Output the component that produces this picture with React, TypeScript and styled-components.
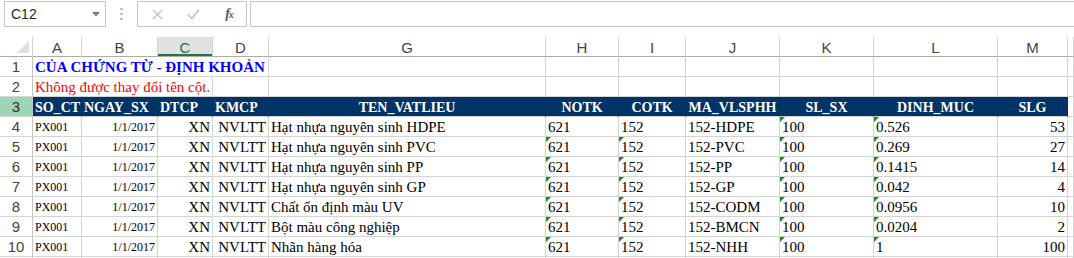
import React from "react";
import styled, { createGlobalStyle, css } from "styled-components";

const GlobalStyle = createGlobalStyle`
  html, body { margin: 0; padding: 0; background: #ffffff; overflow: hidden; }
  #root { width: 1074px; height: 258px; overflow: hidden; }
`;

const COLS = "33px 49px 76px 55px 56px 277px 73px 67px 94px 94px 124px 70px 1fr";
const GRID = "#d4d4d4";
const NAVY = "#003366";
const SERIF = `"Liberation Serif", "Times New Roman", serif`;
const SANS = `"Liberation Sans", Arial, sans-serif`;

const Page = styled.div`
  width: 1074px;
  height: 258px;
  display: flex;
  flex-direction: column;
  background: #fff;
  overflow: hidden;
`;

const FormulaBar = styled.div`
  flex-shrink: 0;
  height: 37px;
  box-sizing: border-box;
  padding: 1px 0 0 4px;
  display: flex;
  align-items: flex-start;
`;

const Box = styled.div`
  height: 26px;
  box-sizing: border-box;
  border: 1px solid #c6c6c6;
  display: flex;
  align-items: center;
`;

const NameBox = styled(Box)`
  width: 102px;
  padding: 0 5px 0 6px;
  justify-content: space-between;
  font-family: ${SANS};
  font-size: 14px;
  color: #262626;
`;

const Dots = styled.div`
  width: 31px;
  height: 26px;
  display: flex;
  align-items: center;
  justify-content: center;
`;

const ButtonBox = styled(Box)`
  width: 110px;
  padding: 0 0 0 12px;
`;

const IconSlot = styled.div<{ $w: number }>`
  width: ${(p) => p.$w}px;
  height: 24px;
  display: flex;
  align-items: center;
  justify-content: center;
`;

const Fx = styled.span`
  font-family: ${SERIF};
  font-style: italic;
  font-weight: bold;
  font-size: 14px;
  color: #5a5a5a;
  letter-spacing: -1px;
  & > small {
    font-size: 10px;
  }
`;

const FormulaInput = styled(Box)`
  flex: 1;
  margin-left: 3px;
  border-right: none;
`;

const SheetRow = styled.div<{ $h?: number }>`
  flex-shrink: 0;
  display: grid;
  grid-template-columns: ${COLS};
  height: ${(p) => p.$h ?? 20}px;
`;

const ColHead = styled.div<{ $sel?: boolean }>`
  box-sizing: border-box;
  border-right: 1px solid ${GRID};
  border-bottom: 1px solid #ababab;
  display: flex;
  align-items: center;
  justify-content: center;
  font-family: ${SANS};
  font-size: 15px;
  color: #444;
  padding-top: 1px;
  ${(p) =>
    p.$sel &&
    css`
      background: #e1e1e1;
      color: #217346;
      box-shadow: inset 0 -2px 0 #217346;
    `}
`;

const Corner = styled.div`
  box-sizing: border-box;
  border-right: 1px solid ${GRID};
  border-bottom: 1px solid #ababab;
  display: flex;
  align-items: flex-end;
  justify-content: flex-end;
  padding: 0 3px 3px 0;
`;

const RowNum = styled.div<{ $sel?: boolean }>`
  box-sizing: border-box;
  border-right: 1px solid #c6c6c6;
  border-bottom: 1px solid ${GRID};
  display: flex;
  align-items: center;
  justify-content: center;
  font-family: ${SANS};
  font-size: 15px;
  color: #444;
  background: ${(p) => (p.$sel ? "#9fd5b7" : "#fff")};
  ${(p) => p.$sel && css`color: #2b2b2b;`}
`;

type Align = "left" | "right" | "center";

const Cell = styled.div<{
  $align?: Align;
  $span?: number;
  $size?: number;
  $bold?: boolean;
  $color?: string;
  $fill?: string;
  $flag?: boolean;
}>`
  position: relative;
  box-sizing: border-box;
  grid-column: span ${(p) => p.$span ?? 1};
  border-right: 1px solid ${(p) => p.$fill ?? GRID};
  border-bottom: 1px solid ${GRID};
  background: ${(p) => p.$fill ?? "transparent"};
  display: flex;
  align-items: flex-end;
  justify-content: ${(p) =>
    p.$align === "right" ? "flex-end" : p.$align === "center" ? "center" : "flex-start"};
  padding: 0 2px 0 2px;
  font-family: ${SERIF};
  font-size: ${(p) => p.$size ?? 15}px;
  font-weight: ${(p) => (p.$bold ? 700 : 400)};
  color: ${(p) => p.$color ?? "#000"};
  line-height: 17px;
  white-space: nowrap;
  overflow: visible;
  ${(p) =>
    p.$flag &&
    css`
      &::before {
        content: "";
        position: absolute;
        left: 0;
        top: 0;
        width: 0;
        height: 0;
        border-top: 5px solid #1e8a1e;
        border-right: 5px solid transparent;
      }
    `}
`;

const letters = ["A", "B", "C", "D", "G", "H", "I", "J", "K", "L", "M", ""];

const headers: { t: string; a: Align }[] = [
  { t: "SO_CT", a: "left" },
  { t: "NGAY_SX", a: "left" },
  { t: "DTCP", a: "left" },
  { t: "KMCP", a: "left" },
  { t: "TEN_VATLIEU", a: "center" },
  { t: "NOTK", a: "center" },
  { t: "COTK", a: "center" },
  { t: "MA_VLSPHH", a: "center" },
  { t: "SL_SX", a: "center" },
  { t: "DINH_MUC", a: "center" },
  { t: "SLG", a: "center" },
];

const rows = [
  { name: "Hạt nhựa nguyên sinh HDPE", code: "152-HDPE", dm: "0.526", slg: "53" },
  { name: "Hạt nhựa nguyên sinh PVC", code: "152-PVC", dm: "0.269", slg: "27" },
  { name: "Hạt nhựa nguyên sinh PP", code: "152-PP", dm: "0.1415", slg: "14" },
  { name: "Hạt nhựa nguyên sinh GP", code: "152-GP", dm: "0.042", slg: "4" },
  { name: "Chất ổn định màu UV", code: "152-CODM", dm: "0.0956", slg: "10" },
  { name: "Bột màu công nghiệp", code: "152-BMCN", dm: "0.0204", slg: "2" },
  { name: "Nhãn hàng hóa", code: "152-NHH", dm: "1", slg: "100" },
];

const EmptyCells = ({ n }: { n: number }) => (
  <>
    {Array.from({ length: n }).map((_, i) => (
      <Cell key={i} />
    ))}
  </>
);

export default function App() {
  return (
    <Page>
      <GlobalStyle />
      <FormulaBar>
        <NameBox>
          <span>C12</span>
          <svg width="8" height="5" viewBox="0 0 8 5">
            <path d="M0 0 L8 0 L4 4.5 Z" fill="#7a7a7a" />
          </svg>
        </NameBox>
        <Dots>
          <svg width="3" height="14" viewBox="0 0 3 14">
            <rect x="0.5" y="1" width="2" height="2" fill="#a8a8a8" />
            <rect x="0.5" y="6" width="2" height="2" fill="#a8a8a8" />
            <rect x="0.5" y="11" width="2" height="2" fill="#a8a8a8" />
          </svg>
        </Dots>
        <ButtonBox>
          <IconSlot $w={14}>
            <svg width="11" height="11" viewBox="0 0 11 11">
              <path d="M1 1 L10 10 M10 1 L1 10" stroke="#c4c4c4" strokeWidth="1.4" />
            </svg>
          </IconSlot>
          <IconSlot $w={58}>
            <svg width="13" height="11" viewBox="0 0 13 11">
              <path d="M1 5.5 L4.8 9.5 L12 1" stroke="#c4c4c4" strokeWidth="1.8" fill="none" />
            </svg>
          </IconSlot>
          <IconSlot $w={14}>
            <Fx>
              f<small>x</small>
            </Fx>
          </IconSlot>
        </ButtonBox>
        <FormulaInput />
      </FormulaBar>

      <SheetRow>
        <Corner>
          <svg width="12" height="12" viewBox="0 0 12 12">
            <path d="M12 0 L12 12 L0 12 Z" fill="#dfdfdf" />
          </svg>
        </Corner>
        {letters.map((l, i) => (
          <ColHead key={i} $sel={l === "C"}>
            {l}
          </ColHead>
        ))}
      </SheetRow>

      <SheetRow>
        <RowNum>1</RowNum>
        <Cell $span={4} $bold $color="#0000ff">
          CỦA CHỨNG TỪ - ĐỊNH KHOẢN
        </Cell>
        <EmptyCells n={8} />
      </SheetRow>

      <SheetRow>
        <RowNum>2</RowNum>
        <Cell $span={3} $color="#ff0000">
          Không được thay đổi tên cột.
        </Cell>
        <EmptyCells n={9} />
      </SheetRow>

      <SheetRow>
        <RowNum $sel>3</RowNum>
        {headers.map((h) => (
          <Cell key={h.t} $fill={NAVY} $bold $size={14} $color="#fff" $align={h.a}>
            {h.t}
          </Cell>
        ))}
        <Cell />
      </SheetRow>

      {rows.map((r, i) => {
        const flagged = i > 0;
        return (
          <SheetRow key={r.code}>
            <RowNum>{i + 4}</RowNum>
            <Cell $size={12}>PX001</Cell>
            <Cell $size={12} $align="right">
              1/1/2017
            </Cell>
            <Cell $align="right">XN</Cell>
            <Cell $align="right">NVLTT</Cell>
            <Cell>{r.name}</Cell>
            <Cell $flag={flagged}>621</Cell>
            <Cell $flag={flagged}>152</Cell>
            <Cell>{r.code}</Cell>
            <Cell $flag>100</Cell>
            <Cell $flag>{r.dm}</Cell>
            <Cell $align="right">{r.slg}</Cell>
            <Cell />
          </SheetRow>
        );
      })}

      <SheetRow>
        <RowNum />
        <EmptyCells n={12} />
      </SheetRow>
    </Page>
  );
}
